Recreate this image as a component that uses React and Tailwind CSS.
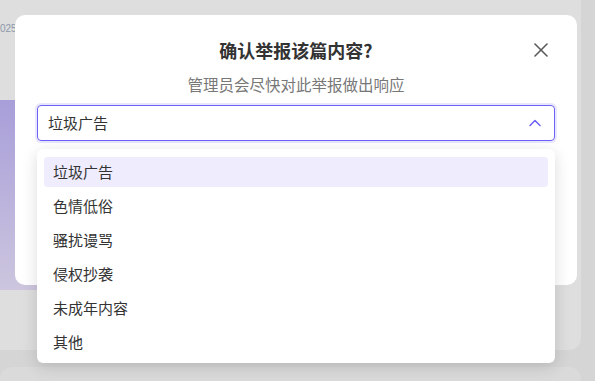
import { X, ChevronUp } from "lucide-react";

const options = ["垃圾广告", "色情低俗", "骚扰谩骂", "侵权抄袭", "未成年内容", "其他"];

const ReportDialog = () => {
  const selected = "垃圾广告";

  return (
    <div
      className="relative w-[595px] h-[381px] overflow-hidden bg-[#d5d5d5]"
      style={{ fontFamily: '"Noto Sans CJK SC", "Noto Sans", sans-serif' }}
    >
      {/* Page behind the overlay */}
      <div className="flex flex-col w-[581px]">
        <div className="h-[350px] bg-[#dedede] rounded-br-xl flex flex-col">
          <div className="h-[100px] pt-[22px] text-[10px] leading-[14px] text-[#8c98ab]" style={{ fontFamily: '"Liberation Sans", sans-serif' }}>025</div>
          <div className="h-[190px] w-[300px] bg-gradient-to-b from-[#a89ed9] to-[#cdc6de]"></div>
        </div>
        <div className="mt-[17px] h-[40px] bg-[#dadada] rounded-t-xl"></div>
      </div>

      {/* Modal */}
      <div className="absolute left-[15px] top-[15px] w-[562px] h-[270px] bg-white rounded-[10px] px-[22px] pt-[22px]">
        <button className="absolute right-[24px] top-[23px] text-[#5a5a5a]">
          <X size={24} strokeWidth={1.6} />
        </button>

        <h2 className="text-center text-[18px] leading-[26px] font-bold text-[#333]">
          确认举报该篇内容?
        </h2>
        <p className="mt-[10px] text-center text-[15.5px] leading-[22px] text-[#777]">
          管理员会尽快对此举报做出响应
        </p>

        <div className="relative mt-[10px]">
          <div className="h-[36px] flex items-center justify-between pl-[10px] pr-[9px] border border-[#6c60f6] rounded-[4px] ring-2 ring-[#6c60f6]/15">
            <span className="text-[15px] text-[#333]">{selected}</span>
            <ChevronUp size={20} strokeWidth={1.8} className="text-[#6c60f6]" />
          </div>

          {/* Dropdown */}
          <div className="absolute left-0 right-0 top-[44px] bg-white rounded-[6px] shadow-[0_4px_16px_rgba(0,0,0,0.14)] pt-[8px] pb-[6px] px-[7px] flex flex-col gap-[4px]">
            {options.map((opt) => (
              <div
                key={opt}
                className={`h-[30px] flex items-center pl-[9px] rounded-[4px] text-[15px] text-[#333] ${
                  opt === selected ? "bg-[#efecfd]" : ""
                }`}
              >
                {opt}
              </div>
            ))}
          </div>
        </div>
      </div>
    </div>
  );
};

export default function App() {
  return <ReportDialog />;
}
